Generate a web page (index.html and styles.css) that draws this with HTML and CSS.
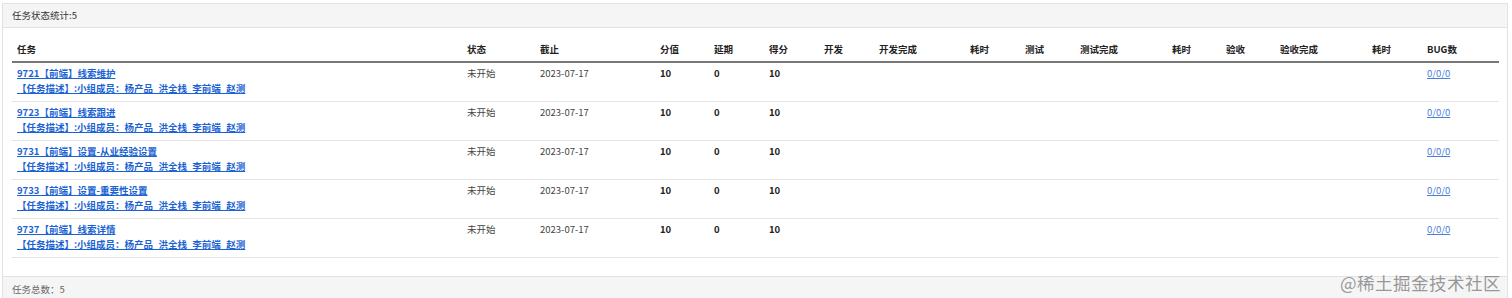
FILE: index.html
```html
<!DOCTYPE html>
<html lang="zh-CN">
<head>
<meta charset="utf-8">
<title>任务状态统计</title>
<link rel="stylesheet" href="styles.css">
</head>
<body>
<div class="panel">
  <div class="panel-heading">任务状态统计:5</div>
  <div class="panel-body">
    <table class="task-table">
      <colgroup>
        <col style="width:450px"><col style="width:73px"><col style="width:120px"><col style="width:54px"><col style="width:55px"><col style="width:55px"><col style="width:55px"><col style="width:91px"><col style="width:55px"><col style="width:55px"><col style="width:92px"><col style="width:54px"><col style="width:54px"><col style="width:92px"><col style="width:55px"><col>
      </colgroup>
      <thead>
        <tr>
          <th>任务</th><th>状态</th><th>截止</th><th>分值</th><th>延期</th><th>得分</th><th>开发</th><th>开发完成</th><th>耗时</th><th>测试</th><th>测试完成</th><th>耗时</th><th>验收</th><th>验收完成</th><th>耗时</th><th>BUG数</th>
        </tr>
      </thead>
      <tbody>
        <tr>
          <td><a class="task-link" href="#">9721【前端】线索维护</a><br><a class="task-link" href="#">【任务描述】:小组成员：杨产品_洪全栈_李前端_赵测</a></td>
          <td>未开始</td><td>2023-07-17</td><td class="num">10</td><td class="num">0</td><td class="num">10</td><td></td><td></td><td></td><td></td><td></td><td></td><td></td><td></td><td></td>
          <td><a class="bug-link" href="#">0/0/0</a></td>
        </tr>
        <tr>
          <td><a class="task-link" href="#">9723【前端】线索跟进</a><br><a class="task-link" href="#">【任务描述】:小组成员：杨产品_洪全栈_李前端_赵测</a></td>
          <td>未开始</td><td>2023-07-17</td><td class="num">10</td><td class="num">0</td><td class="num">10</td><td></td><td></td><td></td><td></td><td></td><td></td><td></td><td></td><td></td>
          <td><a class="bug-link" href="#">0/0/0</a></td>
        </tr>
        <tr>
          <td><a class="task-link" href="#">9731【前端】设置-从业经验设置</a><br><a class="task-link" href="#">【任务描述】:小组成员：杨产品_洪全栈_李前端_赵测</a></td>
          <td>未开始</td><td>2023-07-17</td><td class="num">10</td><td class="num">0</td><td class="num">10</td><td></td><td></td><td></td><td></td><td></td><td></td><td></td><td></td><td></td>
          <td><a class="bug-link" href="#">0/0/0</a></td>
        </tr>
        <tr>
          <td><a class="task-link" href="#">9733【前端】设置-重要性设置</a><br><a class="task-link" href="#">【任务描述】:小组成员：杨产品_洪全栈_李前端_赵测</a></td>
          <td>未开始</td><td>2023-07-17</td><td class="num">10</td><td class="num">0</td><td class="num">10</td><td></td><td></td><td></td><td></td><td></td><td></td><td></td><td></td><td></td>
          <td><a class="bug-link" href="#">0/0/0</a></td>
        </tr>
        <tr>
          <td><a class="task-link" href="#">9737【前端】线索详情</a><br><a class="task-link" href="#">【任务描述】:小组成员：杨产品_洪全栈_李前端_赵测</a></td>
          <td>未开始</td><td>2023-07-17</td><td class="num">10</td><td class="num">0</td><td class="num">10</td><td></td><td></td><td></td><td></td><td></td><td></td><td></td><td></td><td></td>
          <td><a class="bug-link" href="#">0/0/0</a></td>
        </tr>
      </tbody>
    </table>
  </div>
  <div class="panel-footer">任务总数：5</div>
  <div class="watermark">@稀土掘金技术社区</div>
</div>
</body>
</html>
```

FILE: styles.css
```css
html, body {
  margin: 0;
  padding: 0;
  background: #ffffff;
}
body {
  font-family: "Noto Sans CJK SC", "Noto Sans", sans-serif;
  font-size: 9.5px;
  color: #333;
}
.panel {
  position: relative;
  margin: 3px 4px 0 2px;
  border: 1px solid #e2e2e2;
  border-bottom: none;
  background: #fff;
}
.panel-heading {
  background: #f5f5f5;
  border-bottom: 1px solid #e2e2e2;
  height: 23px;
  line-height: 23px;
  padding: 0 9px;
  color: #333;
}
.panel-body {
  padding: 8px 8px 18px 9px;
}
.task-table {
  width: 100%;
  border-collapse: collapse;
  table-layout: fixed;
}
.task-table th {
  text-align: left;
  font-weight: bold;
  color: #222;
  padding: 6px 5px 4px;
  line-height: 15px;
  border-bottom: 2px solid #777;
  white-space: nowrap;
}
.task-table td {
  padding: 3px 5px 5px;
  line-height: 15px;
  vertical-align: top;
  border-bottom: 1px solid #e4e4e4;
  color: #444;
  white-space: nowrap;
}
.task-table td.num {
  font-weight: bold;
  color: #222;
}
.task-link {
  color: #1b63d4;
  font-weight: 600;
  text-decoration: underline;
}
.bug-link {
  color: #4a80dc;
  text-decoration: underline;
}
.panel-footer {
  background: #f5f5f5;
  border-top: 1px solid #e2e2e2;
  height: 24px;
  line-height: 24px;
  padding: 0 9px;
  color: #666;
}
.watermark {
  position: absolute;
  right: 6px;
  bottom: 8px;
  font-size: 17.5px;
  line-height: 20px;
  color: rgba(120, 120, 120, 0.75);
  letter-spacing: 0.5px;
}
```
